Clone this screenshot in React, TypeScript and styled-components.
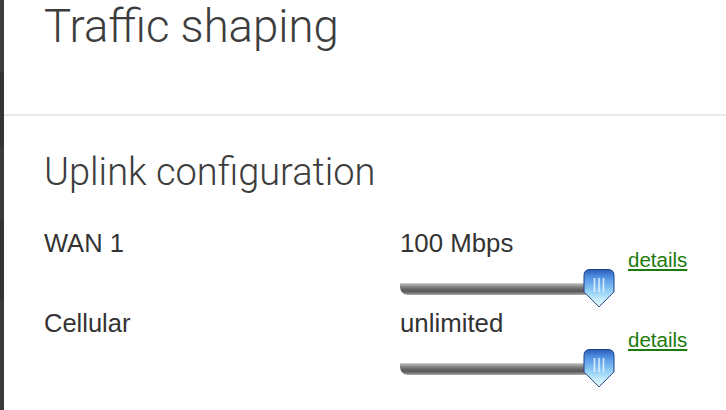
import * as React from 'react'
import styled, {createGlobalStyle} from 'styled-components'

const GlobalStyle = createGlobalStyle`
  html, body {
    margin: 0;
    padding: 0;
    background: #ffffff;
  }
`

const Page = styled.div`
  display: flex;
  min-height: 410px;
  font-family: "Liberation Sans", Arial, sans-serif;
  color: #333;
`

const Rail = styled.div`
  width: 4px;
  flex: none;
  background: linear-gradient(#3c3c3c 0 72px, #333 72px 147px, #3a3a3a 147px 220px, #333 220px 300px, #3b3b3b 300px);
`

const Main = styled.div`
  flex: 1;
  min-width: 0;
`

const Header = styled.header`
  height: 114px;
  padding-left: 40px;
  border-bottom: 2px solid #e9e9e9;
  box-sizing: content-box;
`

const Title = styled.h1`
  margin: 0;
  padding-top: 2px;
  font-family: Roboto, "Open Sans", sans-serif;
  font-weight: 300;
  font-size: 45.5px;
  line-height: 50px;
  color: #3d3d3d;
`

const Section = styled.section`
  padding: 34px 0 0 40px;
`

const SectionTitle = styled.h2`
  margin: 0 0 36px;
  font-family: Roboto, "Open Sans", sans-serif;
  font-weight: 300;
  font-size: 38px;
  line-height: 44px;
  color: #3d3d3d;
`

const Row = styled.div`
  display: grid;
  grid-template-columns: 356px 228px auto;
  height: 80px;
`

const Label = styled.div`
  font-size: 25.5px;
  line-height: 26px;
  color: #333;
`

const Control = styled.div`
  display: flex;
  flex-direction: column;
`

const Value = styled.div`
  font-size: 25.8px;
  line-height: 26px;
  color: #333;
`

const SliderArea = styled.div`
  position: relative;
  height: 42px;
`

const Track = styled.div`
  position: absolute;
  left: 0;
  top: 27px;
  width: 196px;
  height: 12px;
  border-radius: 0 0 0 8px;
  background: linear-gradient(#cfcfcf, #9a9a9a 20%, #666 50%, #5a5a5a 70%, #8a8a8a 90%, #b5b5b5);
`

const Handle = styled.svg`
  position: absolute;
  left: 183px;
  top: 12px;
`

const Details = styled.a`
  margin-top: 19px;
  font-size: 20.5px;
  line-height: 22px;
  color: #1d7a0c;
  text-decoration: underline;
  text-decoration-thickness: 2px;
  text-underline-offset: 2px;
  align-self: start;
`

const SliderHandle = ({id}: {id: string}) => (
  <Handle width="32" height="40" viewBox="0 0 32 40">
    <defs>
      <linearGradient id={`body-${id}`} x1="0" y1="0" x2="0" y2="1">
        <stop offset="0" stopColor="#2a5db5" />
        <stop offset="0.2" stopColor="#4f90e2" />
        <stop offset="0.55" stopColor="#8ccaf6" />
        <stop offset="0.8" stopColor="#c6ecfd" />
        <stop offset="1" stopColor="#ecfbff" />
      </linearGradient>
    </defs>
    <path
      d="M7 1.5 H25 Q31 1.5 31 7.5 V24 L16 39 L1 24 V7.5 Q1 1.5 7 1.5 Z"
      fill={`url(#body-${id})`}
      stroke="#1b3d86"
      strokeWidth="1"
    />
    <path d="M1.5 24 L16 38.5 L30.5 24" fill="none" stroke="#8a9aa8" strokeWidth="1" opacity="0.7" />
    <g stroke="#eaf4ff" strokeWidth="1.6" opacity="0.85">
      <line x1="11.5" y1="10" x2="11.5" y2="24" />
      <line x1="16" y1="10" x2="16" y2="24" />
      <line x1="20.5" y1="10" x2="20.5" y2="24" />
    </g>
  </Handle>
)

interface Uplink {
  name: string
  limit: string
}

const uplinks: Uplink[] = [
  {name: 'WAN 1', limit: '100 Mbps'},
  {name: 'Cellular', limit: 'unlimited'}
]

export default function App() {
  return (
    <React.Fragment>
      <GlobalStyle />
      <Page>
        <Rail />
        <Main>
          <Header>
            <Title>Traffic shaping</Title>
          </Header>
          <Section>
            <SectionTitle>Uplink configuration</SectionTitle>
            {uplinks.map((u, i) => (
              <Row key={u.name}>
                <Label>{u.name}</Label>
                <Control>
                  <Value>{u.limit}</Value>
                  <SliderArea>
                    <Track />
                    <SliderHandle id={String(i)} />
                  </SliderArea>
                </Control>
                <Details href="#">details</Details>
              </Row>
            ))}
          </Section>
        </Main>
      </Page>
    </React.Fragment>
  )
}
